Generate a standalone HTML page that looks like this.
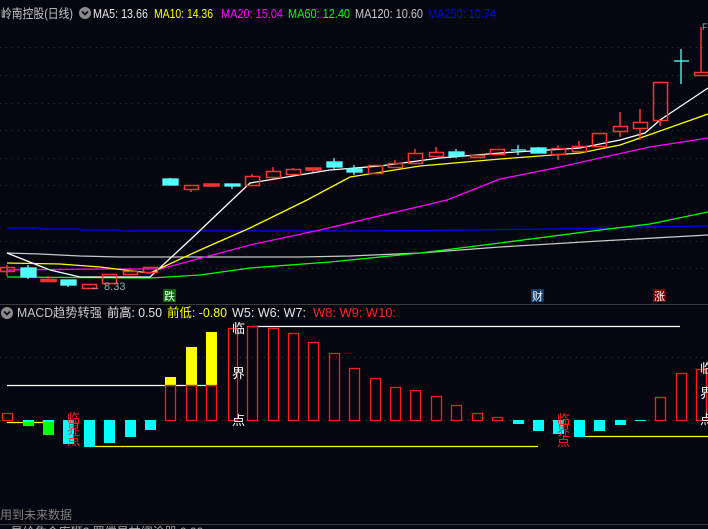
<!DOCTYPE html>
<html><head><meta charset="utf-8"><style>
html,body{margin:0;padding:0;background:#05060f;width:708px;height:529px;overflow:hidden}
svg{display:block}
text{font-family:"Liberation Sans","Noto Sans CJK SC",sans-serif}
</style></head><body>
<svg width="708" height="529" viewBox="0 0 708 529" xmlns="http://www.w3.org/2000/svg">
<rect width="708" height="529" fill="#05060f"/>
<!-- header -->
<text x="1" y="18" font-size="12.5" fill="#c8c8c8" textLength="72" lengthAdjust="spacingAndGlyphs">岭南控股(日线)</text>
<circle cx="85" cy="13" r="6" fill="#8a8a8a"/><path d="M82 11.5l3 3 3-3" stroke="#05060f" stroke-width="1.6" fill="none"/>
<text x="93" y="18" font-size="13" fill="#e6e6e6" textLength="55" lengthAdjust="spacingAndGlyphs">MA5: 13.66</text>
<text x="154" y="18" font-size="13" fill="#ffff00" textLength="59" lengthAdjust="spacingAndGlyphs">MA10: 14.36</text>
<text x="221" y="18" font-size="13" fill="#ff00ff" textLength="62" lengthAdjust="spacingAndGlyphs">MA20: 15.04</text>
<text x="288" y="18" font-size="13" fill="#00ff00" textLength="62" lengthAdjust="spacingAndGlyphs">MA60: 12.40</text>
<text x="355" y="18" font-size="13" fill="#c8c8c8" textLength="68" lengthAdjust="spacingAndGlyphs">MA120: 10.60</text>
<text x="428" y="18" font-size="13" fill="#0000ff" textLength="68" lengthAdjust="spacingAndGlyphs">MA250: 10.74</text>
<!-- grid -->
<g stroke="#3a3a3a" stroke-dasharray="1,5" stroke-width="1">
<line x1="0" y1="47.5" x2="708" y2="47.5"/><line x1="0" y1="75.5" x2="708" y2="75.5"/><line x1="0" y1="103.5" x2="708" y2="103.5"/><line x1="0" y1="130.5" x2="708" y2="130.5"/><line x1="0" y1="158.5" x2="708" y2="158.5"/><line x1="0" y1="185.5" x2="708" y2="185.5"/><line x1="0" y1="213.5" x2="708" y2="213.5"/><line x1="0" y1="241.5" x2="708" y2="241.5"/><line x1="0" y1="268.5" x2="708" y2="268.5"/>
<line x1="0" y1="357.5" x2="708" y2="357.5"/><line x1="0" y1="420.5" x2="708" y2="420.5"/>
</g>
<!-- MA lines -->
<g fill="none" stroke-width="1.3">
<polyline stroke="#0000ff" points="7,228 40,228 40,229 80,229 80,230 120,230 120,231 360,231 470,230 550,229 610,228 650,227 708,226"/>
<polyline stroke="#c8c8c8" points="7,253 40,254 80,256 120,257 300,257 350,256 420,253 500,247 600,241 708,235"/>
<polyline stroke="#00ff00" points="7,277 150,278 200,275 250,268 330,262 420,253 500,243 600,230 650,224 708,212"/>
<polyline stroke="#ff00ff" points="7,270 100,269 160,269 250,245 320,230 447,200 500,179 560,167 600,158 650,147 708,138"/>
<polyline stroke="#ffff00" points="7,263 60,264 100,267 150,273 200,250 250,228 307,200 350,177 420,166 500,159 580,153 620,145 660,131 708,114"/>
<polyline stroke="#ffffff" points="7,253 50,270 80,277 150,277 190,240 232,200 250,183 330,170 380,166 440,158 500,153 580,148 620,140 645,133 660,120 690,100 708,88"/>
</g>
<!-- candles -->
<g stroke="#ff3333" stroke-width="1.5" fill="none">
<rect x="0.5" y="267.5" width="14" height="4"/><line x1="7" y1="265" x2="7" y2="276"/>
<rect x="41" y="279.5" width="15" height="2" fill="#ff3333"/><line x1="48" y1="276" x2="48" y2="280"/>
<rect x="82.5" y="284.5" width="14" height="4"/>
<rect x="102.5" y="274.5" width="14" height="9"/>
<rect x="123.5" y="271.5" width="14" height="3"/><line x1="130" y1="268" x2="130" y2="272"/>
<rect x="143.5" y="267.5" width="14" height="5"/>
<rect x="184.5" y="185.5" width="14" height="4"/><line x1="191" y1="189" x2="191" y2="192"/>
<rect x="204" y="184" width="15" height="2" fill="#ff3333"/>
<rect x="245.5" y="176.5" width="14" height="9"/><line x1="252" y1="174" x2="252" y2="176"/>
<rect x="266.5" y="171.5" width="14" height="6"/><line x1="273" y1="167" x2="273" y2="171"/>
<rect x="286.5" y="169.5" width="14" height="5"/><line x1="293" y1="168" x2="293" y2="170"/>
<rect x="306" y="168" width="15" height="2" fill="#ff3333"/><line x1="313" y1="170" x2="313" y2="172"/>
<rect x="368.5" y="165.5" width="14" height="8"/>
<rect x="388.5" y="163.5" width="14" height="4"/><line x1="395" y1="160" x2="395" y2="163"/>
<rect x="408.5" y="153.5" width="14" height="10"/><line x1="415" y1="149" x2="415" y2="153"/>
<rect x="429.5" y="152.5" width="14" height="4"/><line x1="436" y1="147" x2="436" y2="152"/>
<rect x="470.5" y="155.5" width="14" height="2"/>
<rect x="490.5" y="149.5" width="14" height="5"/>
<rect x="551.5" y="148.5" width="14" height="6"/><line x1="558" y1="145" x2="558" y2="148"/><line x1="558" y1="155" x2="558" y2="160"/>
<rect x="572.5" y="146.5" width="14" height="5"/><line x1="579" y1="141" x2="579" y2="146"/>
<rect x="592.5" y="133.5" width="14" height="13"/>
<rect x="613.5" y="126.5" width="14" height="5"/><line x1="620" y1="112" x2="620" y2="126"/><line x1="620" y1="132" x2="620" y2="137"/>
<rect x="633.5" y="122.5" width="14" height="6"/><line x1="640" y1="109" x2="640" y2="122"/><line x1="640" y1="129" x2="640" y2="140"/>
<rect x="653.5" y="82.5" width="14" height="38"/><line x1="660" y1="121" x2="660" y2="126"/>
<rect x="694.5" y="72.5" width="14" height="3"/><line x1="701" y1="27" x2="701" y2="72"/>
</g>
<g fill="#55ffff" stroke="#55ffff" stroke-width="1.3">
<rect x="21" y="268" width="15" height="9"/><line x1="28" y1="265" x2="28" y2="279"/>
<rect x="61" y="280" width="15" height="5"/><line x1="68" y1="285" x2="68" y2="287"/>
<rect x="163" y="179" width="15" height="6"/><line x1="170" y1="178" x2="170" y2="179"/>
<rect x="225" y="184" width="15" height="2"/><line x1="232" y1="186" x2="232" y2="189"/>
<rect x="327" y="162" width="15" height="5"/><line x1="334" y1="158" x2="334" y2="169"/>
<rect x="347" y="169" width="15" height="3"/><line x1="354" y1="165" x2="354" y2="175"/>
<rect x="449" y="152" width="15" height="4"/><line x1="456" y1="149" x2="456" y2="158"/>
<line x1="511" y1="150" x2="526" y2="150"/><line x1="518" y1="145" x2="518" y2="155"/>
<rect x="531" y="148" width="15" height="5"/><line x1="538" y1="147" x2="538" y2="148"/>
<line x1="674" y1="61" x2="689" y2="61" fill="none"/><line x1="681" y1="49" x2="681" y2="84"/>
</g>
<text x="90" y="290" font-size="11" fill="#9aa">← 8.33</text>
<text x="702" y="30" font-size="9" fill="#aaa">F</text>
<!-- bottom markers -->
<rect x="163" y="289" width="13" height="13" fill="#006a00"/><text x="164" y="300" font-size="11" fill="#fff">跌</text>
<rect x="531" y="289" width="13" height="13" fill="#0a3a6a"/><text x="532" y="300" font-size="11" fill="#fff">财</text>
<rect x="653" y="289" width="13" height="13" fill="#7a0000"/><text x="654" y="300" font-size="11" fill="#fff">涨</text>
<line x1="0" y1="304.5" x2="708" y2="304.5" stroke="#3c3c3c" stroke-width="1"/>
<!-- MACD header -->
<circle cx="7" cy="313" r="6" fill="#8a8a8a"/><path d="M4 311.5l3 3 3-3" stroke="#05060f" stroke-width="1.6" fill="none"/>
<text x="17" y="317" font-size="12.5" fill="#c8c8c8" textLength="85" lengthAdjust="spacingAndGlyphs">MACD趋势转强</text>
<text x="107" y="317" font-size="12.5" fill="#e6e6e6" textLength="55" lengthAdjust="spacingAndGlyphs">前高: 0.50</text>
<text x="167" y="317" font-size="12.5" fill="#ffff00" textLength="60" lengthAdjust="spacingAndGlyphs">前低: -0.80</text>
<text x="232" y="317" font-size="12.5" fill="#e6e6e6" textLength="74" lengthAdjust="spacingAndGlyphs">W5: W6: W7:</text>
<text x="313" y="317" font-size="12.5" fill="#ff2020" textLength="83" lengthAdjust="spacingAndGlyphs">W8: W9: W10:</text>
<!-- MACD lines -->
<line x1="7" y1="385.5" x2="217" y2="385.5" stroke="#fff" stroke-width="1.2"/>
<line x1="252" y1="326.5" x2="680" y2="326.5" stroke="#fff" stroke-width="1.2"/>
<line x1="7" y1="422.5" x2="45" y2="422.5" stroke="#ffff00" stroke-width="1.2"/>
<line x1="89" y1="446.5" x2="538" y2="446.5" stroke="#ffff00" stroke-width="1.2"/>
<line x1="579" y1="436.5" x2="708" y2="436.5" stroke="#ffff00" stroke-width="1.2"/>
<!-- MACD bars -->
<g fill="#00ffff">
<rect x="23" y="420" width="11" height="2"/><rect x="43" y="420" width="11" height="2"/>
<rect x="63" y="420" width="11" height="24"/><rect x="84" y="420" width="11" height="27"/><rect x="104" y="420" width="11" height="23"/><rect x="125" y="420" width="11" height="17"/><rect x="145" y="420" width="11" height="10"/>
<rect x="513" y="420" width="11" height="4"/><rect x="533" y="420" width="11" height="11"/><rect x="553" y="420" width="11" height="14"/><rect x="574" y="420" width="11" height="17"/><rect x="594" y="420" width="11" height="11"/><rect x="615" y="420" width="11" height="5"/><rect x="635" y="420" width="11" height="1"/>
</g>
<g fill="#00ff00"><rect x="23" y="422" width="11" height="4"/><rect x="43" y="422" width="11" height="13"/></g>
<g fill="#ffff00"><rect x="165" y="377" width="11" height="8"/><rect x="186" y="347" width="11" height="38"/><rect x="206" y="332" width="11" height="53"/></g>
<g fill="none" stroke="#ff1a1a" stroke-width="1.3">
<rect x="2.5" y="413.5" width="10" height="7"/>
<rect x="165.5" y="385.5" width="10" height="35"/><rect x="186.5" y="385.5" width="10" height="35"/><rect x="206.5" y="385.5" width="10" height="35"/>
<rect x="228.5" y="328.5" width="9" height="92"/><rect x="247.5" y="326.5" width="10" height="94"/><rect x="268.5" y="328.5" width="10" height="92"/><rect x="288.5" y="333.5" width="10" height="87"/><rect x="308.5" y="342.5" width="10" height="78"/><rect x="329.5" y="353.5" width="10" height="67"/><rect x="349.5" y="368.5" width="10" height="52"/><rect x="370.5" y="378.5" width="10" height="42"/><rect x="390.5" y="387.5" width="10" height="33"/><rect x="410.5" y="390.5" width="10" height="30"/><rect x="431.5" y="396.5" width="10" height="24"/><rect x="451.5" y="405.5" width="10" height="15"/><rect x="472.5" y="413.5" width="10" height="7"/><rect x="492.5" y="417.5" width="10" height="3"/>
<rect x="655.5" y="397.5" width="10" height="23"/><rect x="676.5" y="373.5" width="10" height="47"/><rect x="696.5" y="369.5" width="10" height="51"/>
</g>
<!-- 临界点 labels -->
<g font-size="13" fill="#ff2020"><text x="67" y="423">临</text><text x="67" y="434">界</text><text x="67" y="445">点</text>
<text x="557" y="424">临</text><text x="557" y="435">界</text><text x="557" y="446">点</text></g>
<g font-size="13" fill="#ffffff"><text x="232" y="333">临</text><text x="232" y="378">界</text><text x="232" y="425">点</text>
<text x="700" y="373">临</text><text x="700" y="398">界</text><text x="700" y="424">点</text></g>
<!-- footer -->
<text x="0" y="519" font-size="12" fill="#808080">用到未来数据</text>
<line x1="0" y1="524.5" x2="708" y2="524.5" stroke="#3c3c3c"/>
<text x="0" y="536" font-size="12" fill="#aaa">● 旱给危合库狮? 罚偿旱甘绸涂器 0.00</text>
</svg>
</body></html>
